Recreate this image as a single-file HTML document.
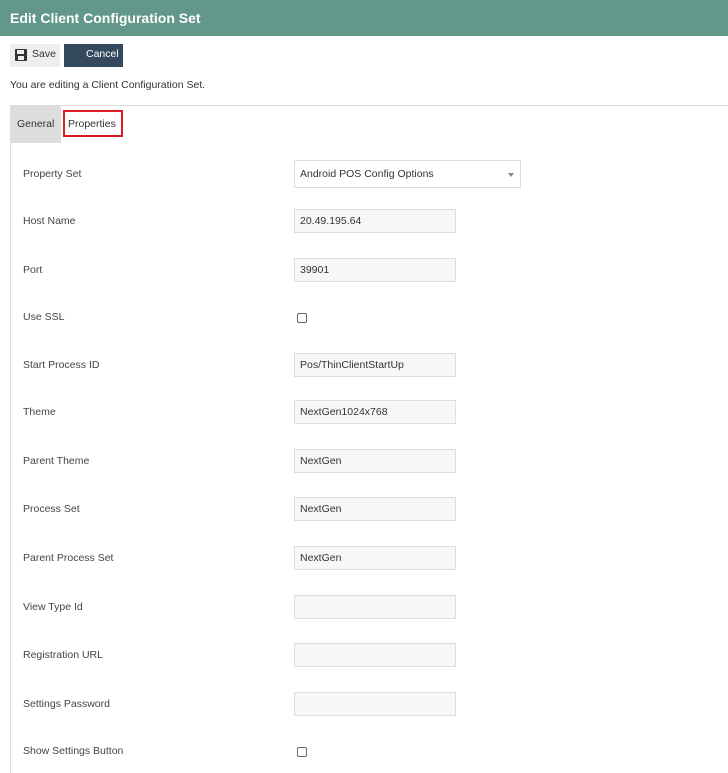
<!DOCTYPE html>
<html><head><style>
body{margin:0;width:728px;height:773px;overflow:hidden;background:#fff;font-family:"Liberation Sans",sans-serif;font-size:10.5px;color:#333;position:relative}
.a{position:absolute}
.hdr{left:0;top:0;width:728px;height:36px;background:#62978a;color:#fff;font-weight:bold;font-size:14px;line-height:37px;padding-left:10px;box-sizing:border-box}
.lbl{left:23px;color:#444}
.inp{left:294px;width:162px;height:24px;border:1px solid #ddd;background:#f7f7f7;box-sizing:border-box;padding-left:5px;line-height:23px;color:#333}
.cb{left:297px;width:8px;height:8px;border:1px solid #666;border-radius:2px}
</style></head><body>
<div class="a hdr">Edit Client Configuration Set</div>
<div class="a" style="left:10px;top:44px;width:50px;height:23px;background:#eee"></div>
<svg class="a" style="left:15px;top:49px" width="12" height="12" viewBox="0 0 12 12"><rect x="0" y="0" width="12" height="12" rx="1" fill="#333"/><rect x="2" y="1" width="7" height="4" fill="#eee"/><rect x="3" y="7" width="6" height="4" fill="#eee"/></svg>
<div class="a" style="left:32px;top:44px;line-height:21px;color:#333">Save</div>
<div class="a" style="left:64px;top:44px;width:59px;height:23px;background:#34495e;color:#fff;line-height:21px;text-indent:22px">Cancel</div>
<div class="a" style="left:10px;top:79px">You are editing a Client Configuration Set.</div>
<div class="a" style="left:10px;top:105px;width:718px;height:1px;background:#ddd"></div>
<div class="a" style="left:10px;top:105px;width:1px;height:668px;background:#ddd"></div>
<div class="a" style="left:10px;top:106px;width:51px;height:37px;background:#ddd;line-height:37px;text-indent:7px">General</div>
<div class="a" style="left:63px;top:110px;width:60px;height:27px;border:2px solid #e01b24;box-sizing:border-box;line-height:25px;text-indent:3px">Properties</div>
<div class="a lbl" style="top:168px">Property Set</div>
<div class="a inp" style="top:160px;width:227px;height:28px;background:#fff;line-height:27px">Android POS Config Options</div>
<div class="a" style="left:508px;top:173px;width:0;height:0;border-left:3px solid transparent;border-right:3px solid transparent;border-top:4px solid #888"></div>
<div class="a lbl" style="top:215px">Host Name</div><div class="a inp" style="top:209px">20.49.195.64</div>
<div class="a lbl" style="top:264px">Port</div><div class="a inp" style="top:258px">39901</div>
<div class="a lbl" style="top:311px">Use SSL</div><div class="a cb" style="top:313px"></div>
<div class="a lbl" style="top:359px">Start Process ID</div><div class="a inp" style="top:353px">Pos/ThinClientStartUp</div>
<div class="a lbl" style="top:406px">Theme</div><div class="a inp" style="top:400px">NextGen1024x768</div>
<div class="a lbl" style="top:455px">Parent Theme</div><div class="a inp" style="top:449px">NextGen</div>
<div class="a lbl" style="top:503px">Process Set</div><div class="a inp" style="top:497px">NextGen</div>
<div class="a lbl" style="top:552px">Parent Process Set</div><div class="a inp" style="top:546px">NextGen</div>
<div class="a lbl" style="top:601px">View Type Id</div><div class="a inp" style="top:595px"></div>
<div class="a lbl" style="top:649px">Registration URL</div><div class="a inp" style="top:643px"></div>
<div class="a lbl" style="top:698px">Settings Password</div><div class="a inp" style="top:692px"></div>
<div class="a lbl" style="top:745px">Show Settings Button</div><div class="a cb" style="top:747px"></div>
</body></html>
